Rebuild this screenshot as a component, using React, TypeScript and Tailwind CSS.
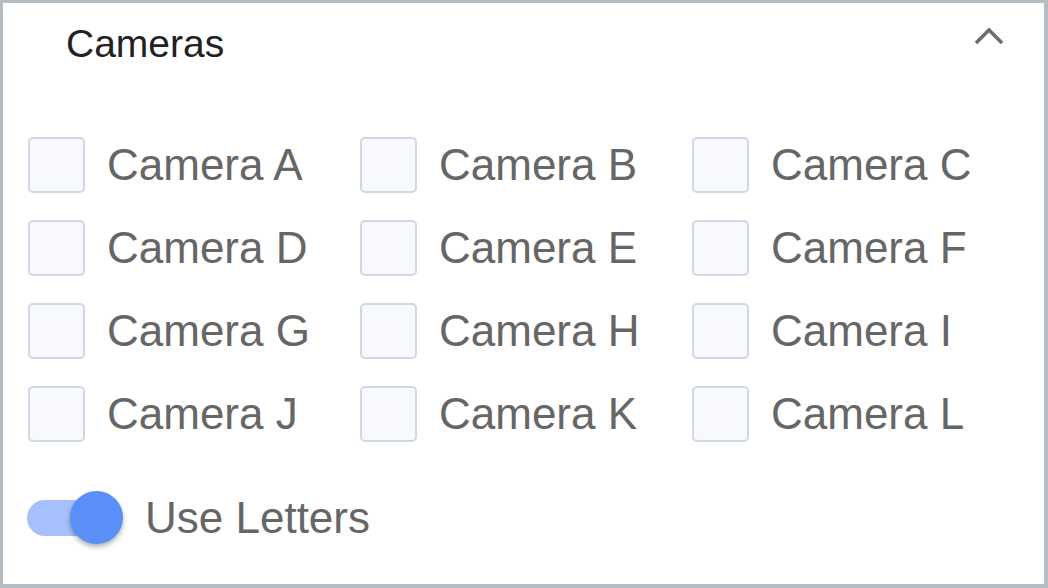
import React from "react";

const cameras = ["A", "B", "C", "D", "E", "F", "G", "H", "I", "J", "K", "L"];

export default function App() {
  return (
    <div
      className="w-[1048px] h-[588px] bg-white border-solid border-[#b4bcc4] border-t-[3px] border-l-[3px] border-r-[4px] border-b-[4px] flex flex-col"
      style={{ fontFamily: '"Liberation Sans", Arial, sans-serif' }}
    >
      <div className="h-[80px] flex items-center justify-between pl-[63px] pr-[40px]">
        <h2 className="text-[39px] leading-none text-[#222]">Cameras</h2>
        <button className="self-start mt-[24px]">
          <svg width="30" height="18" viewBox="0 0 30 18" fill="none">
            <path d="M2 16 L15 3 L28 16" stroke="#6b6b6b" strokeWidth="3.5" />
          </svg>
        </button>
      </div>

      <div className="mt-[54px] pl-[25px] grid grid-cols-[332px_332px_332px] gap-y-[27px]">
        {cameras.map((c) => (
          <label key={c} className="flex items-center gap-[22px] h-[56px] cursor-pointer">
            <span className="w-[57px] h-[56px] rounded-[5px] border-2 border-[#cfd8e4] bg-[#f7f9fd] shrink-0" />
            <span className="text-[44px] leading-none text-[#666]">Camera {c}</span>
          </label>
        ))}
      </div>

      <div className="mt-[49px] pl-[24px] flex items-center gap-[22px] h-[53px]">
        <div className="relative w-[96px] h-[53px] flex items-center">
          <div className="w-[86px] h-[36px] rounded-full bg-[#a5c0fb]" />
          <div className="absolute right-0 top-0 w-[53px] h-[53px] rounded-full bg-[#5a8ff8] shadow-[0_3px_5px_rgba(0,0,0,0.3)]" />
        </div>
        <span className="text-[44px] leading-none text-[#666]">Use Letters</span>
      </div>
    </div>
  );
}
